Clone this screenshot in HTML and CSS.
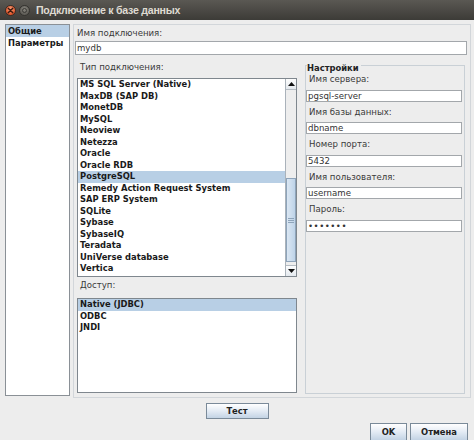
FILE: index.html
```html
<!DOCTYPE html>
<html lang="ru">
<head>
<meta charset="utf-8">
<title>Подключение к базе данных</title>
<link rel="stylesheet" href="styles.css">
</head>
<body>
<div class="titlebar">
  <span class="wbtn close"><svg width="7" height="7" viewBox="0 0 7 7"><path d="M1.2 1.2L5.8 5.8M5.8 1.2L1.2 5.8" stroke="#3a1a10" stroke-width="1.4" stroke-linecap="round"/></svg></span>
  <span class="wbtn min"><span class="min-dot"></span></span>
  <span class="title">Подключение к базе данных</span>
</div>
<div class="main">
  <div class="nav">
    <div class="row sel">Общие</div>
    <div class="row">Параметры</div>
  </div>
  <div class="panel">
    <div class="label conn-label">Имя подключения:</div>
    <div class="input conn-input">mydb</div>
    <div class="cols">
      <div class="leftcol">
        <div class="label type-label">Тип подключения:</div>
        <div class="list types">
          <div class="items">
            <div class="row">MS SQL Server (Native)</div>
            <div class="row">MaxDB (SAP DB)</div>
            <div class="row">MonetDB</div>
            <div class="row">MySQL</div>
            <div class="row">Neoview</div>
            <div class="row">Netezza</div>
            <div class="row">Oracle</div>
            <div class="row">Oracle RDB</div>
            <div class="row sel">PostgreSQL</div>
            <div class="row">Remedy Action Request System</div>
            <div class="row">SAP ERP System</div>
            <div class="row">SQLite</div>
            <div class="row">Sybase</div>
            <div class="row">SybaseIQ</div>
            <div class="row">Teradata</div>
            <div class="row">UniVerse database</div>
            <div class="row">Vertica</div>
          </div>
          <div class="scrollbar">
            <div class="sb-btn"><svg width="7" height="4" viewBox="0 0 7 4"><path d="M0 4L3.5 0L7 4Z" fill="#111"/></svg></div>
            <div class="sb-track"><div class="sb-thumb"><span class="grip"></span></div></div>
            <div class="sb-btn"><svg width="7" height="4" viewBox="0 0 7 4"><path d="M0 0L3.5 4L7 0Z" fill="#111"/></svg></div>
          </div>
        </div>
        <div class="label access-label">Доступ:</div>
        <div class="list access">
          <div class="items">
            <div class="row sel">Native (JDBC)</div>
            <div class="row">ODBC</div>
            <div class="row">JNDI</div>
          </div>
        </div>
      </div>
      <div class="group">
        <div class="group-title"><span>Настройки</span></div>
        <div class="label field-label">Имя сервера:</div>
        <div class="input field-input">pgsql-server</div>
        <div class="label field-label">Имя базы данных:</div>
        <div class="input field-input">dbname</div>
        <div class="label field-label">Номер порта:</div>
        <div class="input field-input">5432</div>
        <div class="label field-label">Имя пользователя:</div>
        <div class="input field-input">username</div>
        <div class="label field-label">Пароль:</div>
        <div class="input field-input pw">•••••••</div>
      </div>
    </div>
  </div>
</div>
<div class="test-row"><button class="btn test">Тест</button></div>
<div class="actions">
  <button class="btn ok">OK</button>
  <button class="btn cancel">Отмена</button>
</div>
</body>
</html>
```
FILE: styles.css
```css
html, body {
  margin: 0;
  padding: 0;
}
body {
  width: 474px;
  height: 440px;
  overflow: hidden;
  background: #ededed;
  font-family: "DejaVu Sans", sans-serif;
  color: #333;
}

.titlebar {
  height: 20px;
  background: linear-gradient(#5a5853, #3c3b37);
  display: flex;
  align-items: center;
  padding-left: 5px;
}
.wbtn {
  width: 11px;
  height: 11px;
  border-radius: 50%;
  display: flex;
  align-items: center;
  justify-content: center;
  box-sizing: border-box;
}
.close {
  background: radial-gradient(circle at 50% 35%, #f7a07a, #e35a2f 65%, #c9421c);
  border: 1px solid #3d2a22;
}
.min {
  margin-left: 3px;
  background: radial-gradient(circle at 50% 35%, #87857e, #5f5d57 70%);
  border: 1px solid #34332f;
}
.min-dot {
  width: 5px;
  height: 5px;
  border-radius: 50%;
  border: 1px solid #3b3a36;
  box-sizing: border-box;
}
.title {
  margin-left: 6px;
  color: #dfdbd2;
  font: bold 10.6px "Liberation Sans", sans-serif;
  letter-spacing: -0.25px;
  white-space: nowrap;
}

.main {
  display: flex;
  padding: 4px 0 0 5px;
  height: 374px;
}
.nav {
  width: 65px;
  height: 372px;
  box-sizing: border-box;
  border: 1px solid #8a9096;
  background: #fff;
}
.row {
  height: 11.5px;
  line-height: 11.5px;
  font: bold 8.4px "DejaVu Sans", sans-serif;
  color: #1a1a1a;
  padding-left: 2px;
  white-space: nowrap;
}
.row.sel {
  background: #b8cfe5;
}
.nav .row {
  height: 12px;
  line-height: 12px;
}

.panel {
  margin-left: 3px;
  width: 398px;
  height: 374px;
  box-sizing: border-box;
  border: 1px solid #d2d6da;
}
.label {
  font-size: 8.6px;
  color: #3a3a3a;
  padding-left: 3px;
  white-space: nowrap;
}
.conn-label {
  height: 16px;
  line-height: 16px;
}
.input {
  background: #fff;
  border: 1px solid #a3a7ab;
  box-sizing: border-box;
  font-size: 8.6px;
  color: #333;
  padding-left: 1px;
  white-space: nowrap;
}
.conn-input {
  margin-left: 1px;
  width: 392px;
  height: 14px;
  line-height: 12px;
}

.cols {
  display: flex;
}
.leftcol {
  margin-left: 3px;
  width: 220px;
}
.type-label {
  height: 23px;
  line-height: 24px;
}
.list {
  display: flex;
  background: #fff;
  border: 1px solid #7f878e;
  box-sizing: border-box;
}
.list .items {
  flex: 1;
}
.types {
  height: 199px;
}
.scrollbar {
  width: 10px;
  display: flex;
  flex-direction: column;
  border-left: 1px solid #aab2ba;
  background: #eeeeee;
}
.sb-btn {
  height: 11px;
  box-sizing: border-box;
  background: linear-gradient(#fdfdfd, #e4e9ee);
  border-bottom: 1px solid #b5bcc3;
  display: flex;
  align-items: center;
  justify-content: center;
}
.sb-btn:last-child {
  border-bottom: 0;
  border-top: 1px solid #b5bcc3;
}
.sb-track {
  flex: 1;
  padding-top: 88px;
}
.sb-thumb {
  height: 84px;
  box-sizing: border-box;
  border: 1px solid #8ea4ba;
  background: linear-gradient(90deg, #dbe7f3, #bed3e8);
  display: flex;
  align-items: center;
  justify-content: center;
}
.grip {
  width: 6px;
  height: 5px;
  background: repeating-linear-gradient(#8ea4ba 0 1px, transparent 1px 2px);
}
.access-label {
  height: 21px;
  line-height: 17px;
}
.access {
  height: 95px;
}

.group {
  margin-left: 8px;
  margin-top: 10px;
  width: 160px;
  height: 329px;
  box-sizing: border-box;
  border: 1px solid #c9d0d6;
}
.group-title {
  margin: -7px 0 0 1px;
  height: 10px;
  line-height: 14px;
}
.group-title span {
  background: #ededed;
  padding-right: 2px;
  font: bold 8.4px "DejaVu Sans", sans-serif;
  color: #222;
}
.field-label {
  height: 20.5px;
  line-height: 20.5px;
}
.field-input {
  width: 156px;
  height: 12px;
  line-height: 10px;
}
.pw {
  letter-spacing: 0.5px;
}

.test-row {
  display: flex;
  justify-content: center;
  margin-top: 5px;
}
.btn {
  margin: 0;
  padding: 0;
  height: 16px;
  box-sizing: border-box;
  border: 1px solid #7a8a99;
  border-radius: 0;
  background: linear-gradient(#ffffff, #e3ebf4 50%, #c3d3e4);
  font: bold 8.4px "DejaVu Sans", sans-serif;
  color: #222;
}
.test {
  width: 63px;
}
.actions {
  display: flex;
  justify-content: flex-end;
  gap: 3px;
  margin-top: 4px;
  padding-right: 6px;
}
.actions .btn {
  height: 18px;
}
.ok {
  width: 37px;
}
.cancel {
  width: 58px;
}
```
